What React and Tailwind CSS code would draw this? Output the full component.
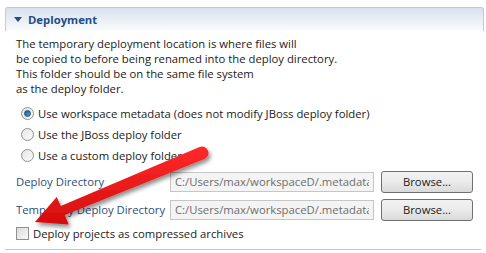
import React from 'react'

function Radio({ checked }) {
  return (
    <span className="relative w-[13px] h-[13px] rounded-full border border-[#8e8f8f] bg-gradient-to-br from-[#e6e6e6] to-[#fbfbfb] flex items-center justify-center shrink-0">
      {checked && (
        <span className="w-[7px] h-[7px] rounded-full bg-gradient-to-br from-[#1d5a8a] to-[#4aa3e0] border border-[#1b4c78]" />
      )}
    </span>
  )
}

function PathRow({ label, value }) {
  return (
    <div className="flex items-center h-[23px]">
      <span className="w-[154px] shrink-0 whitespace-nowrap text-[#2d4e78]">{label}</span>
      <div className="w-[204px] shrink-0 h-[20px] border border-[#c6c6c6] bg-[#f4f4f4] text-[#6d6d6d] px-[4px] flex items-center overflow-hidden">
        <span className="block w-full overflow-hidden whitespace-nowrap">{value}</span>
      </div>
      <button className="ml-[7px] shrink-0 w-[92px] h-[22px] rounded-[3px] border border-[#707070] bg-gradient-to-b from-[#f2f2f2] via-[#ebebeb] to-[#d9d9d9] text-[#1a1a1a] flex items-center justify-center">
        Browse...
      </button>
    </div>
  )
}

export default function App() {
  return (
    <div
      className="relative w-[486px] h-[253px] bg-white overflow-hidden text-[11.3px] leading-[15px] text-[#1a1a1a]"
      style={{ fontFamily: '"Segoe UI", "Open Sans", "Noto Sans", sans-serif' }}
    >
      {/* Section header */}
      <div className="pt-[7px] pl-[5px] pr-[2px]">
        <div className="h-[24px] border border-b-0 border-[#c3cad4] rounded-t-[3px] bg-gradient-to-b from-[#d9e1ec] to-[#fafcfe] flex items-center pl-[8px] gap-[6px]">
          <svg width="8" height="6" viewBox="0 0 8 6">
            <path d="M0 0 L8 0 L4 5 Z" fill="#1f4e87" />
          </svg>
          <span className="font-bold text-[#1f4e87] text-[11.3px]">Deployment</span>
        </div>
      </div>

      {/* Description */}
      <div className="pl-[16px] mt-[5px]">
        <p>The temporary deployment location is where files will</p>
        <p>be copied to before being renamed into the deploy directory.</p>
        <p>This folder should be on the same file system</p>
        <p>as the deploy folder.</p>
      </div>

      {/* Options */}
      <div className="pl-[21px] mt-[7px] flex flex-col">
        <label className="flex items-center gap-[4px] h-[21px]">
          <Radio checked />
          <span>Use workspace metadata (does not modify JBoss deploy folder)</span>
        </label>
        <label className="flex items-center gap-[4px] h-[21px]">
          <Radio />
          <span>Use the JBoss deploy folder</span>
        </label>
        <label className="flex items-center gap-[4px] h-[21px]">
          <Radio />
          <span>Use a custom deploy folder</span>
        </label>
      </div>

      {/* Directories */}
      <div className="pl-[16px] mt-[4px] flex flex-col gap-[5px]">
        <PathRow label="Deploy Directory" value="C:/Users/max/workspaceD/.metadata" />
        <PathRow label="Temporary Deploy Directory" value="C:/Users/max/workspaceD/.metadata" />
      </div>

      <label className="pl-[16px] mt-[5px] flex items-center gap-[4px] h-[14px]">
        <span className="w-[13px] h-[13px] border border-[#8e8f8f] bg-gradient-to-br from-[#dcdcdc] to-[#f8f8f8] shrink-0" />
        <span>Deploy projects as compressed archives</span>
      </label>

      <div className="mt-[9px] mx-[5px] border-t border-[#b7c9de]" />

      {/* Red annotation arrow */}
      <svg className="absolute left-0 top-0 pointer-events-none" width="486" height="253">
        <defs>
          <filter id="shadow" x="-20%" y="-20%" width="140%" height="160%">
            <feDropShadow dx="2" dy="3" stdDeviation="2" floodColor="#000" floodOpacity="0.45" />
          </filter>
          <linearGradient id="red" x1="0" y1="0" x2="0" y2="1">
            <stop offset="0" stopColor="#ff2a2a" />
            <stop offset="1" stopColor="#d40d0d" />
          </linearGradient>
        </defs>
        <g filter="url(#shadow)" fill="url(#red)">
          <path d="M35 222 L56.7 197 L60.8 205.9 L199.5 146.9 A6 6 0 0 1 204.5 158.9 L64.8 215.1 L68.7 224.5 Z" />
        </g>
      </svg>
    </div>
  )
}
